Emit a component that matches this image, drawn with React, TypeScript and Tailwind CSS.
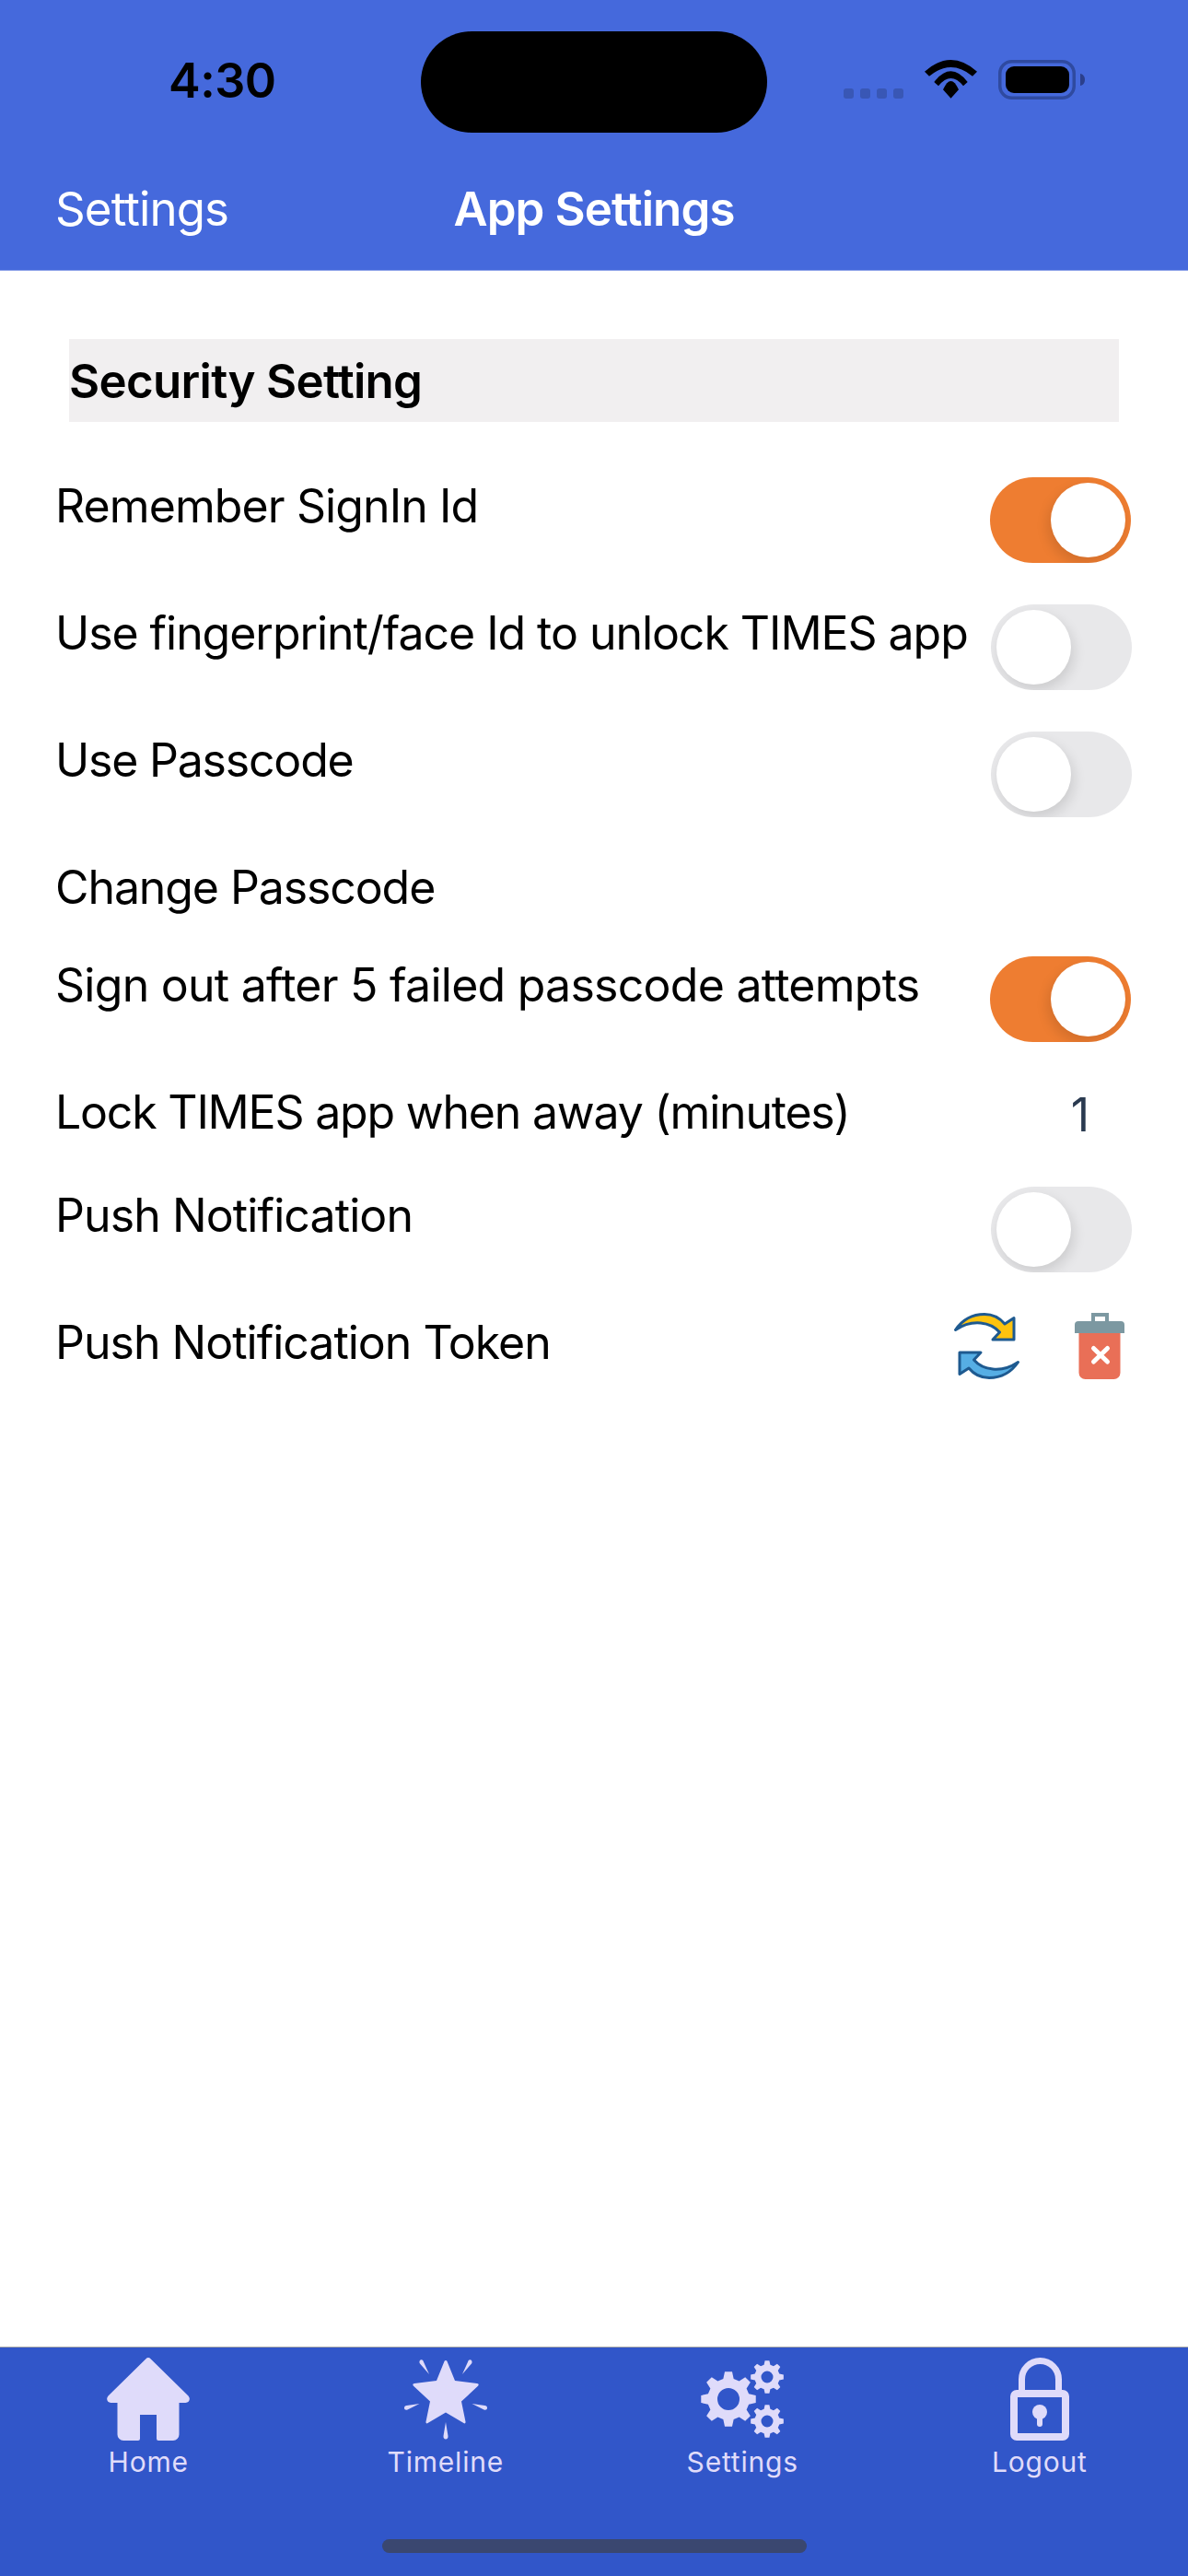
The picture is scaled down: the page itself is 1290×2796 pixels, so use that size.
const font = "font-['Inter','Liberation_Sans',sans-serif]";

function gearPath(cx: number, cy: number, r: number, hole: number, teeth: number) {
  const pts: string[] = [];
  const root = r * 0.76;
  const step = (Math.PI * 2) / teeth;
  for (let i = 0; i < teeth; i++) {
    const a = i * step - Math.PI / 2;
    const seq: [number, number][] = [
      [root, a - step * 0.32],
      [r, a - step * 0.17],
      [r, a + step * 0.17],
      [root, a + step * 0.32],
    ];
    seq.forEach(([rad, ang]) => pts.push(`${(cx + rad * Math.cos(ang)).toFixed(2)} ${(cy + rad * Math.sin(ang)).toFixed(2)}`));
  }
  return `M${pts.join("L")}Z M${cx - hole} ${cy}a${hole} ${hole} 0 1 0 ${hole * 2} 0a${hole} ${hole} 0 1 0 ${-hole * 2} 0Z`;
}

function StatusIcons() {
  return (
    <svg width="262" height="43" viewBox="0 0 262 43" className="block">
      {[0, 18, 36, 54].map((x) => (
        <rect key={x} x={x} y="31" width="11" height="11" rx="3" fill="#3957b5" />
      ))}
      <g transform="translate(88 0)" fill="#000">
        <path d="M0 12.7Q28.5 -12.7 57 12.7L52 17.7Q28.5 -1.7 5 17.7Z" />
        <path d="M10.3 24Q28.5 .6 46.7 24L42 28.3Q28.5 11.7 15 28.3Z" />
        <path d="M20 32.3Q28.5 13.7 37 32.3L28.5 41.7Z" />
      </g>
      <rect x="169.75" y="1.75" width="80.5" height="39.5" rx="13" fill="none" stroke="#2f4aa0" strokeWidth="3.5" />
      <rect x="176" y="7" width="69" height="29" rx="9" fill="#000" />
      <path d="M257 15c3 .5 5 3 5 6.500s-2 6-5 6.500Z" fill="#2b3f8c" />
    </svg>
  );
}

function Toggle({ on }: { on: boolean }) {
  return on ? (
    <div className="mr-[1px] flex h-[93px] w-[153px] shrink-0 items-center justify-end overflow-hidden rounded-full bg-[#ee7d31] pr-[6px]">
      <div className="h-[81px] w-[81px] rounded-full bg-white shadow-[-3px_6px_14px_rgba(0,0,0,0.12)]" />
    </div>
  ) : (
    <div className="flex h-[93px] w-[153px] shrink-0 items-center justify-start overflow-hidden rounded-full bg-[#e8e8ea] pl-[6px]">
      <div className="h-[81px] w-[81px] rounded-full bg-white shadow-[3px_6px_14px_rgba(0,0,0,0.12)]" />
    </div>
  );
}

function Row({ label, h, tracking = "tracking-[-1px]", children }: { label: string; h: string; tracking?: string; children?: React.ReactNode }) {
  return (
    <div className={`flex items-start justify-between pl-[60px] pr-[61px] ${h}`}>
      <span className={`text-[50px] leading-[62px] text-black whitespace-nowrap ${tracking}`}>{label}</span>
      {children}
    </div>
  );
}

function HomeIcon() {
  return (
    <svg width="90" height="90" viewBox="0 0 90 90" fill="#dfdbfa">
      <path fillRule="evenodd" d="M42.500 1.200a3.300 3.300 0 0 1 5 0L88.500 41.500c2.800 3.200 1 7.500-3 7.500H78.500V83.500a6.500 6.500 0 0 1-6.500 6.500H56a2 2 0 0 1-2-2V62H36V88a2 2 0 0 1-2 2H18a6.500 6.500 0 0 1-6.500-6.500V49H4.500c-4 0-5.800-4.300-3-7.500Z" />
    </svg>
  );
}

function StarIcon() {
  return (
    <svg width="90" height="90" viewBox="0 0 90 90" fill="#dfdbfa">
      <path d="M43.500 4a1.600 1.600 0 0 1 3 0L55 25L79 28c1.800.2 2.200 1.500 1 2.800L62 47.500L66.500 69.500c.3 1.600-.8 2.400-2 1.600L45 59.500L25.500 71.100c-1.200.8-2.300 0-2-1.600L28 47.500L10 30.800c-1.200-1.300-.8-2.600 1-2.800L35 25Z" />
      <path d="M27 18L17 6.500c-1.200-2-.2-4.300 1.500-4.300c1.300 0 2 .8 2.300 2Z" />
      <path d="M63 18L73 6.500c1.200-2 .2-4.300-1.500-4.300c-1.300 0-2 .8-2.300 2Z" />
      <path d="M16.500 50L3.500 56.500c-2 .8-3.500-.2-3.500-2c0-1.500 1-2.300 2.500-2.600Z" />
      <path d="M73.500 50L86.500 56.500c2 .8 3.500-.2 3.500-2c0-1.500-1-2.300-2.500-2.600Z" />
      <path d="M45 70L47.500 85c.2 2-.8 3.500-2.500 3.500s-2.700-1.500-2.500-3.500Z" />
    </svg>
  );
}

function GearsIcon() {
  return (
    <svg width="90" height="90" viewBox="0 0 90 90" fill="#dfdbfa" fillRule="evenodd">
      <path d={gearPath(30, 45, 30, 12, 8)} />
      <path d={gearPath(72, 21, 18, 6.500, 8)} />
      <path d={gearPath(72, 69, 18, 6.500, 8)} />
    </svg>
  );
}

function LockIcon() {
  return (
    <svg width="64" height="90" viewBox="0 0 64 90" fill="#dfdbfa">
      <path d="M12.500 37V23.500a20 20 0 0 1 40 0V37" fill="none" stroke="#dfdbfa" strokeWidth="7" />
      <path fillRule="evenodd" d="M7 35H57a7 7 0 0 1 7 7V83a7 7 0 0 1-7 7H7a7 7 0 0 1-7-7V42a7 7 0 0 1 7-7ZM8 43V82H56V43Z" />
      <circle cx="32" cy="59" r="8" />
      <rect x="29" y="60" width="6" height="15" rx="3" />
    </svg>
  );
}

function RefreshIcon() {
  const d = "M1.500 18.500C10 6 22 1.500 33 1.500C42 1.500 50 6 55 12L65 5.500V29H42L49.500 21C40 10 20 6 1.500 18.500Z";
  return (
    <svg width="72" height="72" viewBox="0 0 72 72">
      <path d={d} fill="#fec30e" stroke="#1e5a90" strokeWidth="3" strokeLinejoin="round" />
      <path d={d} fill="#56aee4" stroke="#1e5a90" strokeWidth="3" strokeLinejoin="round" transform="rotate(180 35.500 36)" />
    </svg>
  );
}

function TrashIcon() {
  return (
    <svg width="54" height="72" viewBox="0 0 54 72">
      <rect x="20" y="2" width="15" height="10" fill="none" stroke="#7c98a1" strokeWidth="4" />
      <path d="M4 9H50a4 4 0 0 1 4 4V22H0V13a4 4 0 0 1 4-4Z" fill="#7c98a1" />
      <path d="M4.500 22H49.500V65a7 7 0 0 1-7 7H11.500a7 7 0 0 1-7-7Z" fill="#e96f57" />
      <path d="M20.500 38.500L35.500 53M35.500 38.500L20.500 53" stroke="#fff" strokeWidth="5" strokeLinecap="round" />
    </svg>
  );
}

function Tab({ label, children }: { label: string; children: React.ReactNode }) {
  return (
    <div className="flex flex-col items-center">
      <div className="flex h-[90px] items-center justify-center">{children}</div>
      <span className="mt-[3px] text-[30px] leading-[40px] tracking-[0.8px] text-[#e0dcfa]">{label}</span>
    </div>
  );
}

export default function App() {
  return (
    <div className={`flex min-h-[2796px] w-[1290px] flex-col bg-white ${font}`}>
      <header className="flex h-[294px] shrink-0 flex-col border-b border-b-[#8fa3e8] bg-[#4569dc]">
        <div className="flex h-[180px] items-start">
          <div className="w-[457px] pl-[183px] pt-[57px] text-[52px] font-semibold leading-[62px] tracking-[-0.5px] text-black">4:30</div>
          <div className="mt-[34px] h-[110px] w-[376px] rounded-[55px] bg-black" />
          <div className="pl-[83px] pt-[65px]">
            <StatusIcons />
          </div>
        </div>
        <div className="grid grid-cols-[1fr_auto_1fr] items-center px-[60px] pt-[16px] text-[51px] leading-[62px] tracking-[-0.9px] text-white">
          <span>Settings</span>
          <span className="font-semibold">App Settings</span>
          <span />
        </div>
      </header>

      <main className="flex-1 pt-[74px]">
        <div className="mx-[75px] mb-[60px] flex h-[90px] items-center bg-[#f1eff0] pt-[2px]">
          <span className="text-[51px] font-semibold leading-[64px] tracking-[-0.7px] text-black">Security Setting</span>
        </div>
        <Row label="Remember SignIn Id" h="h-[138px]" tracking="tracking-[-0.9px]"><Toggle on /></Row>
        <Row label="Use fingerprint/face Id to unlock TIMES app" h="h-[138px]" tracking="tracking-[-1.05px]"><Toggle on={false} /></Row>
        <Row label="Use Passcode" h="h-[138px]" tracking="tracking-[-1.2px]"><Toggle on={false} /></Row>
        <Row label="Change Passcode" h="h-[106px]" tracking="tracking-[-1.1px]" />
        <Row label="Sign out after 5 failed passcode attempts" h="h-[138px]" tracking="tracking-[-0.74px]"><Toggle on /></Row>
        <Row label="Lock TIMES app when away (minutes)" h="h-[112px]" tracking="tracking-[-1.2px]">
          <span className="mr-[46px] pt-[2px] text-[50px] leading-[64px] text-[#2a3a50]">1</span>
        </Row>
        <Row label="Push Notification" h="h-[138px]" tracking="tracking-[-0.9px]"><Toggle on={false} /></Row>
        <Row label="Push Notification Token" h="h-[80px]">
          <div className="-mt-[1px] flex items-start gap-[59px] pr-[8px]">
            <RefreshIcon />
            <TrashIcon />
          </div>
        </Row>
      </main>

      <footer className="flex h-[249px] shrink-0 flex-col border-t border-t-[#a6a6a6] bg-[#3156c9] pt-[11px]">
        <div className="grid grid-cols-4">
          <Tab label="Home"><HomeIcon /></Tab>
          <Tab label="Timeline"><StarIcon /></Tab>
          <Tab label="Settings"><GearsIcon /></Tab>
          <Tab label="Logout"><LockIcon /></Tab>
        </div>
        <div className="mx-auto mt-[64px] h-[15px] w-[461px] rounded-full bg-[#3a4770]" />
      </footer>
    </div>
  );
}
